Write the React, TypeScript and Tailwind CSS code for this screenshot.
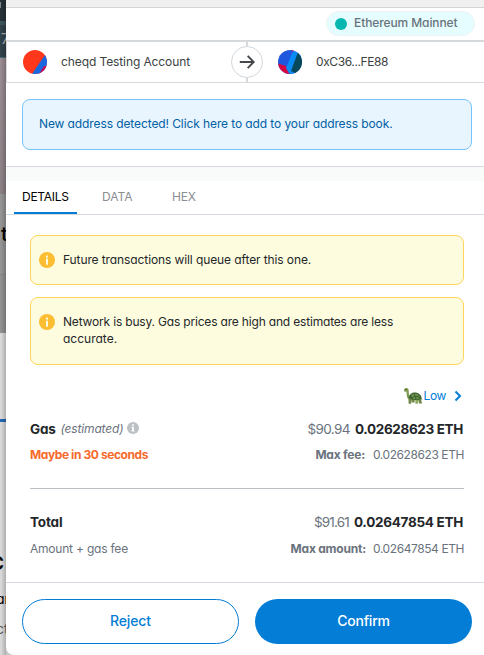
import type { ReactNode } from "react";

function PageBehind() {
  return (
    <div className="relative flex h-full w-[6px] shrink-0 flex-col overflow-hidden">
      <div className="h-[21px] bg-[#263238]" />
      <div className="h-[4px] bg-[#3d555c]" />
      <div className="h-[32px] bg-[#32424a]" />
      <div className="h-px bg-[#416a73]" />
      <div className="h-[136px] bg-gradient-to-b from-[#998c92] to-[#8b8085]" />
      <div className="h-[80px] bg-[#949494]" />
      <div className="h-px bg-[#868686]" />
      <div className="h-[58px] bg-[#919191]" />
      <div className="flex-1 bg-[#d9d9d9]" />
      <span className="absolute left-0 top-[2px] h-[6px] w-px bg-[#7c878c]" />
      <span className="absolute left-[1px] top-[31px] text-[15px] leading-[16px] text-[#a9b1b5]">7</span>
      <span className="absolute left-[1px] top-[222px] text-[20px] font-medium leading-[24px] text-black">t</span>
      <span className="absolute left-0 top-[419px] h-[3px] w-[6px] bg-[#2468b8]" />
      <span className="absolute left-[-10px] top-[553px] text-[19px] font-semibold leading-[22px] text-black">C</span>
      <span className="absolute left-[-4px] top-[591px] text-[14px] leading-[16px] text-black">ar</span>
      <span className="absolute left-[-4px] top-[621px] text-[14px] leading-[16px] text-[#555560]">ct</span>
      <div className="absolute inset-y-0 right-0 w-[5px] bg-gradient-to-r from-transparent to-black/20" />
    </div>
  );
}

function Alert({ tall, children }: { tall?: boolean; children: ReactNode }) {
  return (
    <div className={`flex rounded-[8px] border border-[#ffd45c] bg-[#fefcde] px-2 pt-[15px] text-[12px] leading-[17px] text-[#24272a] ${tall ? "h-[68px]" : "h-[50px]"}`}>
      <svg viewBox="0 0 16 16" className="mr-2 mt-px size-4 shrink-0">
        <circle cx="8" cy="8" r="8" fill="#fdbd33" />
        <rect x="7" y="3.6" width="2" height="2" fill="#fefcde" />
        <rect x="7" y="6.7" width="2" height="6" fill="#fefcde" />
      </svg>
      <div className="whitespace-nowrap">{children}</div>
    </div>
  );
}

function Turtle() {
  return (
    <svg viewBox="0 0 20 18" className="h-[18px] w-5">
      <path d="M1 3.5C1 1.5 2.3.7 3.8 1c1.7.3 2 1.7 1.9 3.2L6 8.6l2 3-2.3.9C3.8 11 3.5 8 3.5 4.8L1.3 4.5z" fill="#7f9b4c" />
      <path d="M5.5 11h3.2l-.5 5.8H5.6zM8.5 12h3l.2 3.6H9zM15 12h3l1 4.5h-3z" fill="#718747" />
      <path d="M12.5 12.5h2.8l-.4 4.3h-2.6zM18 11.2l1.8 1.3-2.3.5z" fill="#93a861" />
      <path d="M5.7 10.8C6 7.5 8.5 5.5 12 5.5s6.5 2.4 6.8 6c-3 2.2-9.5 2.5-13.1-.7z" fill="#3d6633" />
      <path d="M8.2 7.8l2.6-1 .5 2.2-2.3 1.2zM12 6.7l2.7.3.2 2-2.4.2zM15.7 7.7l1.4 1.5-1.3 1zM9.4 11l2.2-1 .9 2-2 .2zM13 10.2l2.3-.1.6 1.7-2.5.4z" fill="#6f9149" />
      <circle cx="2.8" cy="2.5" r=".5" fill="#222" />
    </svg>
  );
}

export default function App() {
  return (
    <div className="flex h-[655px] w-[484px] overflow-hidden bg-[#c9c9c9] font-['Inter','Liberation_Sans',sans-serif] [font-feature-settings:'cv11']">
      <PageBehind />
      <main className="flex w-[478px] flex-col overflow-hidden rounded-bl-[8px] bg-white">
        <div className="h-2 shrink-0 border-b border-[#d4d4d4] bg-[#f0f0f0]" />

        <header className="flex h-[34px] shrink-0 justify-end border-b-2 border-[#d6d9dc] pr-[9px] pt-[3px]">
          <div className="flex h-[25px] w-[149px] items-center rounded-full border border-[#f0f3f4] bg-[#e5fdff] pl-2">
            <span className="mr-[7px] size-3 rounded-full bg-[#06b7b0]" />
            <span className="whitespace-nowrap pb-px text-[12px] font-medium leading-4 tracking-[-0.1px] text-[#6a737d]">Ethereum Mainnet</span>
          </div>
        </header>

        <section className="flex h-[41px] shrink-0 items-center border-b border-l border-[#d8dadd] text-[12px] text-[#3c3f43]">
          <svg viewBox="0 0 24 24" className="ml-4 size-6 shrink-0">
            <clipPath id="from"><circle cx="12" cy="12" r="12" /></clipPath>
            <g clipPath="url(#from)">
              <path d="M0 0h24v24H0z" fill="#ff371b" />
              <path d="M9 24 22 5l9 6-9 19z" fill="#1868df" />
              <path d="m16 24 5-8h6v10z" fill="#c9085a" />
            </g>
          </svg>
          <span className="ml-[14px] w-[170px] whitespace-nowrap tracking-[-0.1px]">cheqd Testing Account</span>
          <div className="flex h-full flex-col items-center">
            <span className="h-1 w-[2px] bg-[#d6d9dc]" />
            <div className="flex size-8 items-center justify-center rounded-full border border-[#d2d8dd]">
              <svg viewBox="0 0 16 16" className="size-4" fill="none" stroke="#44484b" strokeWidth="1.9">
                <path d="M.8 8h13.4M8.7 1.8 14.7 8l-6 6.2" />
              </svg>
            </div>
            <span className="h-1 w-[2px] bg-[#d6d9dc]" />
          </div>
          <svg viewBox="0 0 24 24" className="ml-[15px] size-6 shrink-0">
            <clipPath id="to"><circle cx="12" cy="12" r="12" /></clipPath>
            <g clipPath="url(#to)">
              <path d="M0 0h24v24H0z" fill="#1f58df" />
              <path d="M0 13.5 8 16l5 8H0z" fill="#d50743" />
              <path d="M13-1h3l-1 4z" fill="#d50743" />
              <path d="M15 1 8 18l4 7 4-2 9-18z" fill="#098cf5" />
              <path d="m20 2-7 19 6 3 8-12z" fill="#07485a" />
            </g>
          </svg>
          <span className="ml-[14px] whitespace-nowrap tracking-[-0.4px]">0xC36...FE88</span>
        </section>

        <section className="h-[84px] shrink-0 border-b border-[#d6d9e0] pl-4 pr-3 pt-4">
          <div className="flex h-[51px] items-center whitespace-nowrap rounded-[8px] border border-[#75c4fd] bg-[#e8f5ff] pb-px pl-4 text-[12px] tracking-[-0.1px] text-[#0260a4]">
            New address detected! Click here to add to your address book.
          </div>
        </section>
        <div className="h-[14px] shrink-0 bg-[#f9fafa]" />

        <nav className="flex h-[34px] shrink-0 border-b border-[#d6d9e0] pl-2 text-[12px] leading-4 text-[#8b8d91]">
          <div className="h-[33px] w-[63px] border-b-2 border-[#037dd6] pl-2 pt-2 tracking-[-0.28px] text-black">DETAILS</div>
          <div className="w-[70px] pl-[25px] pt-2">DATA</div>
          <div className="pl-[25px] pt-2 tracking-[-0.2px]">HEX</div>
        </nav>

        <div className="flex flex-col gap-3 pl-6 pr-5 pt-5">
          <Alert><p className="tracking-[-0.1px]">Future transactions will queue after this one.</p></Alert>
          <Alert tall>
            <p className="tracking-[-0.18px]">Network is busy. Gas prices are high and estimates are less</p>
            <p>accurate.</p>
          </Alert>
        </div>

        <section className="flex flex-col whitespace-nowrap pl-6 pr-5 text-[12px] leading-4 text-[#6a737d]">
          <div className="mt-[22px] flex h-[18px] items-center justify-end text-[#037dd6]">
            <Turtle />
            <span className="tracking-[-0.36px]">Low</span>
            <svg viewBox="0 0 8 12" className="ml-2 mr-[2px] h-3 w-2" fill="none" stroke="#037dd6" strokeWidth="2">
              <path d="m1.5 1.5 4.5 4.5-4.5 4.5" />
            </svg>
          </div>
          <div className="mt-[14px] flex h-5 items-center justify-between">
            <div className="flex items-center">
              <b className="mr-[5px] text-[13.5px] tracking-[-0.25px] text-[#24272a]">Gas</b>
              <i className="tracking-[-0.15px]">(estimated)</i>
              <svg viewBox="0 0 12 12" className="mb-[2px] ml-1 size-3">
                <circle cx="6" cy="6" r="6" fill="#bbc0c5" />
                <path d="M5.1 2.2h1.8v1.6H5.1zM4.5 4.8h2.4v3.6h.7v1.2H4.4V8.4h.7V6h-.6z" fill="#fff" />
              </svg>
            </div>
            <div className="flex items-center pr-px">
              <span className="mr-[5px] text-[13.5px] tracking-[-0.6px]">$90.94</span>
              <b className="text-[13.5px] tracking-[-0.35px] text-[#24272a]">0.02628623 ETH</b>
            </div>
          </div>
          <div className="mt-2 flex justify-between">
            <b className="tracking-[-0.41px] text-[#f66a2c]">Maybe in 30 seconds</b>
            <div><b className="mr-2 tracking-[-0.23px]">Max fee:</b><span className="tracking-[-0.42px]">0.02628623 ETH</span></div>
          </div>
          <div className="mt-[25px] h-px bg-[#bbc0c5]" />
          <div className="mt-[23px] flex h-5 items-center justify-between">
            <b className="text-[13.5px] tracking-[-0.15px] text-[#24272a]">Total</b>
            <div className="flex items-center pr-px">
              <span className="mr-[5px] text-[13.5px] tracking-[-0.82px]">$91.61</span>
              <b className="text-[13.5px] tracking-[-0.28px] text-[#24272a]">0.02647854 ETH</b>
            </div>
          </div>
          <div className="mt-[9px] flex justify-between">
            <span className="tracking-[-0.21px]">Amount + gas fee</span>
            <div><b className="mr-[7px] tracking-[-0.21px]">Max amount:</b><span className="tracking-[-0.42px]">0.02647854 ETH</span></div>
          </div>
        </section>

        <footer className="mt-auto flex h-[73px] shrink-0 gap-4 border-t border-[#d6d9e0] pl-4 pr-3 pt-4 text-[14px] font-medium">
          <button className="h-[45px] w-[217px] rounded-full border border-[#037dd6] pb-[2px] tracking-[-0.12px] text-[#037dd6]">Reject</button>
          <button className="h-[45px] w-[217px] rounded-full bg-[#037dd6] pb-[2px] tracking-[-0.22px] text-white">Confirm</button>
        </footer>
      </main>
    </div>
  );
}
